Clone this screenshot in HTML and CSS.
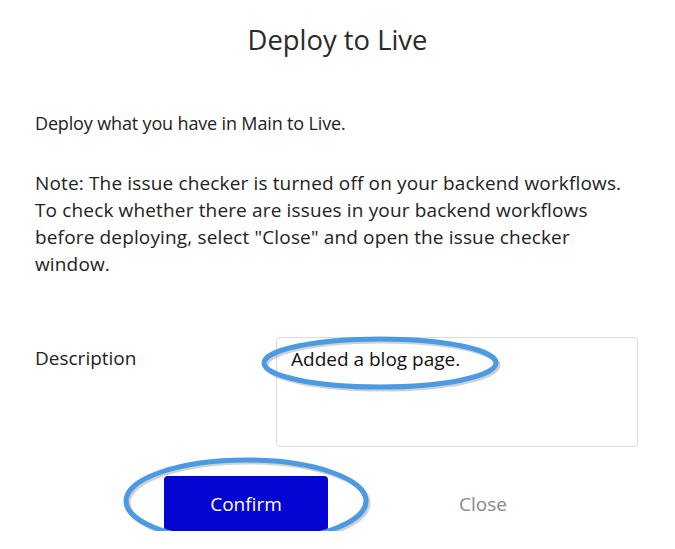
FILE: index.html
```html
<!DOCTYPE html>
<html lang="en">
<head>
  <meta charset="UTF-8">
  <title>Deploy to Live</title>
  <link rel="stylesheet" href="styles.css">
</head>
<body>
  <div class="dialog">
    <h1 class="title">Deploy to Live</h1>

    <p class="intro">Deploy what you have in Main to Live.</p>
    <p class="note">Note: The issue checker is turned off on your backend workflows.<br>To check whether there are issues in your backend workflows<br>before deploying, select "Close" and open the issue checker<br>window.</p>

    <div class="field-row">
      <label class="field-label">Description</label>
      <div class="field-box">
        <div class="field-input">Added a blog page.</div>
        <!-- highlight ring -->
        <svg class="ring ring-desc" width="244" height="62" viewBox="0 0 244 62">
          <ellipse cx="121" cy="30" rx="116" ry="24" class="ring-shadow"/>
          <ellipse cx="119" cy="28" rx="116" ry="24" class="ring-line"/>
        </svg>
      </div>
    </div>

    <div class="actions">
      <div class="confirm-wrap">
        <button class="btn-confirm">Confirm</button>
        <svg class="ring ring-confirm" width="252" height="94" viewBox="0 0 252 94">
          <ellipse cx="125" cy="47" rx="120" ry="41" class="ring-shadow"/>
          <ellipse cx="123" cy="45" rx="120" ry="41" class="ring-line"/>
        </svg>
      </div>
      <button class="btn-close">Close</button>
    </div>
  </div>
</body>
</html>
```

FILE: styles.css
```css
body {
  margin: 0;
  background: #fff;
  font-family: 'Open Sans', sans-serif;
  color: #222;
}

.dialog {
  width: 675px;
  padding: 0 35px;
  box-sizing: border-box;
}

.title {
  margin: 0;
  padding-top: 22px;
  text-align: center;
  font-size: 27.4px;
  font-weight: 400;
  line-height: 36px;
  color: #2a2a2a;
}

.intro {
  margin: 52px 0 0;
  font-size: 18px;
  line-height: 27px;
  letter-spacing: -0.15px;
}

.note {
  margin: 33px 0 0;
  font-size: 19px;
  line-height: 27px;
  letter-spacing: 0.15px;
  white-space: nowrap;
}

.field-row {
  display: flex;
  margin-top: 59px;
}

.field-label {
  width: 241px;
  font-size: 19px;
  line-height: 27px;
  padding-top: 8px;
}

.field-box {
  position: relative;
}

.field-input {
  width: 362px;
  height: 110px;
  box-sizing: border-box;
  border: 1px solid #dcdcdc;
  border-radius: 4px;
  padding: 8px 14px;
  font-size: 19px;
  line-height: 27px;
  color: #111;
}

.ring {
  position: absolute;
  pointer-events: none;
}

.ring-line {
  fill: none;
  stroke: #4a9ae4;
  stroke-width: 5;
}

.ring-shadow {
  fill: none;
  stroke: rgba(0, 0, 0, 0.18);
  stroke-width: 5;
}

.ring-desc {
  left: -15px;
  top: -2px;
}

.actions {
  display: flex;
  align-items: center;
  margin-top: 29px;
}

.confirm-wrap {
  position: relative;
  margin-left: 129px;
}

.btn-confirm {
  display: block;
  width: 164px;
  height: 55px;
  border: none;
  border-radius: 4px;
  background: #0405d3;
  color: #fff;
  font-family: 'Open Sans', sans-serif;
  font-size: 19px;
}

.ring-confirm {
  left: -41px;
  top: -20px;
}

.btn-close {
  margin-left: 84px;
  width: 142px;
  border: none;
  background: none;
  color: #888;
  font-family: 'Open Sans', sans-serif;
  font-size: 19px;
}
```
